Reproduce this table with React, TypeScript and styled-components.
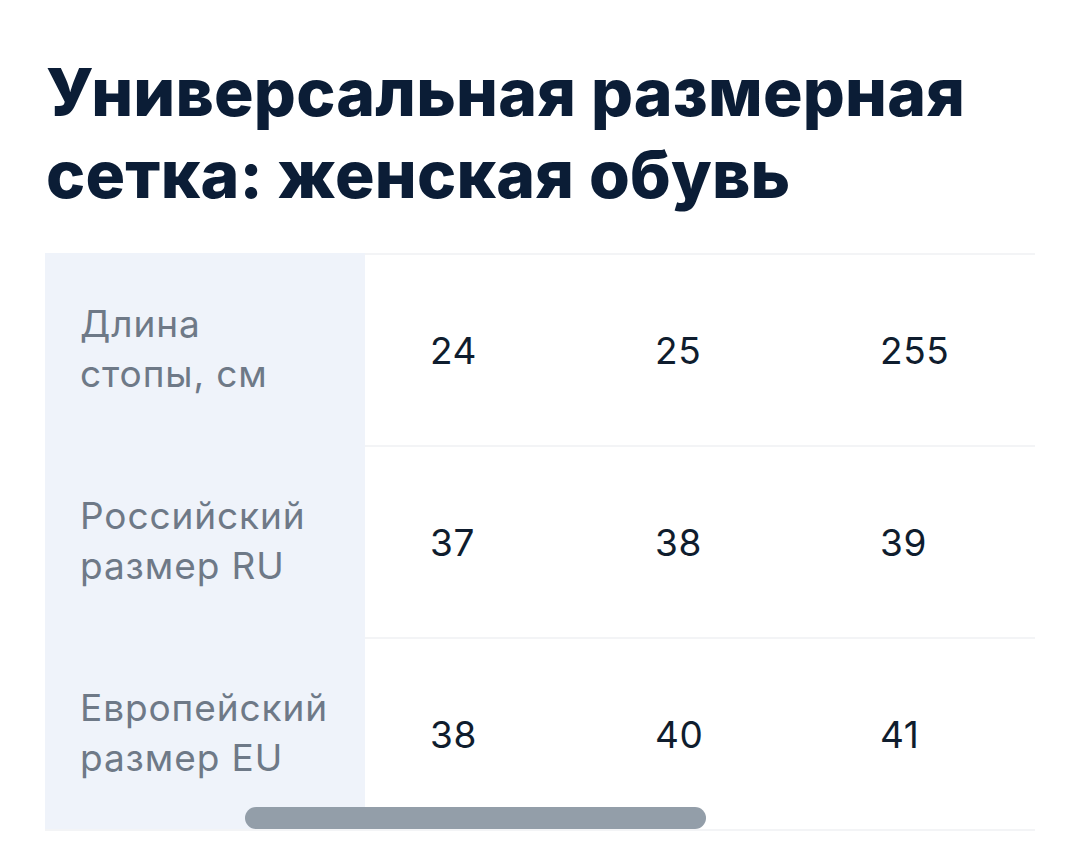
import React from "react";
import styled, { createGlobalStyle } from "styled-components";

const Global = createGlobalStyle`
  html, body { margin: 0; padding: 0; background: #ffffff; }
  body { font-family: Inter, "Noto Sans", sans-serif; }
`;

const Page = styled.main`
  padding: 51px 0 0 45px;
  width: 990px;
`;

const Title = styled.h1`
  margin: 0 0 38px 1px;
  font-family: Inter, "Noto Sans", sans-serif;
  font-weight: 800;
  font-size: 66px;
  line-height: 82px;
  letter-spacing: 0.2px;
  color: #0b1d36;
`;

const Scroller = styled.div`
  position: relative;
  width: 990px;
  overflow: hidden;
`;

const Grid = styled.div`
  display: grid;
  grid-template-columns: 320px repeat(3, 225px);
  grid-auto-rows: 192px;
  width: max-content;
  border-bottom: 2px solid #f3f4f6;
`;

const HeadCell = styled.div`
  background: #eff3fa;
  display: flex;
  align-items: center;
  padding: 0 0 0 35px;
  font-size: 37px;
  line-height: 50px;
  letter-spacing: 0.9px;
  color: #6e7987;
`;

const Cell = styled.div`
  display: flex;
  align-items: center;
  padding: 0 0 0 65px;
  border-top: 2px solid #f3f4f6;
  font-size: 37px;
  letter-spacing: 0.6px;
  color: #0f1d2e;
`;

const Thumb = styled.div`
  position: absolute;
  left: 200px;
  bottom: 2px;
  width: 461px;
  height: 22px;
  border-radius: 11px;
  background: #939ea9;
`;

const rows: { label: React.ReactNode; values: string[] }[] = [
  { label: <>Длина<br />стопы, см</>, values: ["24", "25", "255"] },
  { label: <>Российский<br />размер RU</>, values: ["37", "38", "39"] },
  { label: <>Европейский<br />размер EU</>, values: ["38", "40", "41"] },
];

export default function App() {
  return (
    <>
      <Global />
      <Page>
        <Title>
          Универсальная размерная
          <br />
          сетка: женская обувь
        </Title>
        <Scroller>
          <Grid>
            {rows.map((r, i) => (
              <React.Fragment key={i}>
                <HeadCell>
                  <span>{r.label}</span>
                </HeadCell>
                {r.values.map((v, j) => (
                  <Cell key={j}>{v}</Cell>
                ))}
              </React.Fragment>
            ))}
          </Grid>
          <Thumb />
        </Scroller>
      </Page>
    </>
  );
}
